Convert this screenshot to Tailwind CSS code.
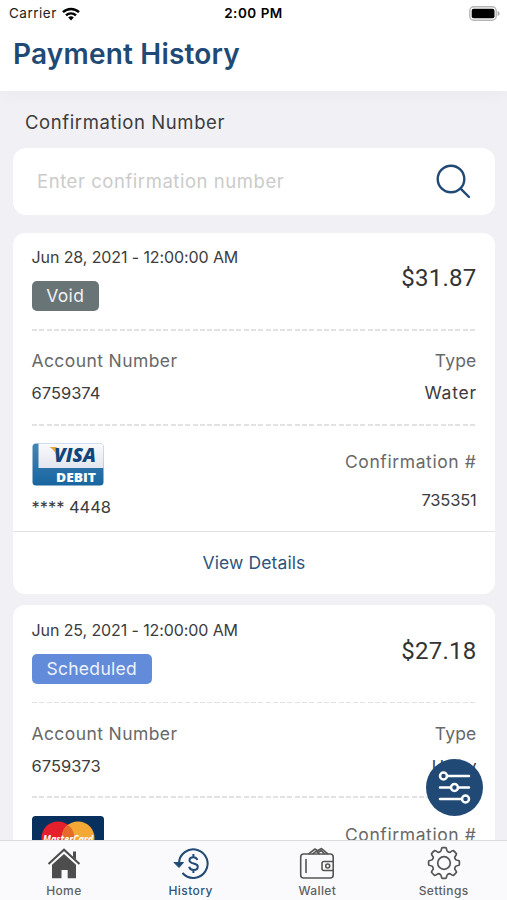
<!DOCTYPE html>
<html lang="en">
<head>
  <meta charset="utf-8">
  <meta name="viewport" content="width=device-width, initial-scale=1">
  <title>Payment History</title>
  <script src="https://cdn.jsdelivr.net/npm/@tailwindcss/browser@4"></script>
</head>
<body class="bg-[#f0f0f5] font-['Inter',sans-serif] text-[#3c3c3c]">
<div class="relative flex flex-col w-[507px] h-[900px] overflow-hidden">

  <header class="h-[91px] shrink-0 bg-white shadow-[0_4px_16px_rgba(0,0,0,0.03)]">
    <div class="grid grid-cols-3 items-center h-[27px] px-[9px] text-[13.5px] text-black">
      <div class="flex items-center gap-[5px]">
        <span class="tracking-[0.5px] text-[#222]">Carrier</span>
        <svg class="w-[18px] h-[14px]" viewBox="0 0 18 14" fill="none" stroke="#000" stroke-width="2.4">
          <path d="M1 5.2a11.5 11.5 0 0 1 16 0M4 8.4a7.2 7.2 0 0 1 10 0" />
          <path d="M9 13.4 6.2 10.6a4 4 0 0 1 5.6 0z" fill="#000" stroke="none" />
        </svg>
      </div>
      <span class="text-center font-semibold tracking-[0.5px] whitespace-nowrap">2:00 PM</span>
      <svg class="justify-self-end -mr-[2px] w-[31px] h-[15px]" viewBox="0 0 31 15">
        <rect x=".8" y=".8" width="26.4" height="13.4" rx="4" fill="#fff" stroke="#b5b5b5" stroke-width="1.4" />
        <rect x="2.7" y="2.7" width="22.8" height="9.6" rx="2" fill="#000" />
        <path d="M28.6 5v5c1.2-.4 2-1.3 2-2.5s-.8-2.1-2-2.5z" fill="#a5a5a5" />
      </svg>
    </div>
    <h1 class="pl-[13px] leading-[54px] text-[28px] font-semibold tracking-[0.2px] text-[#204a75]">Payment History</h1>
  </header>

  <main class="flex flex-col pl-[13px] pr-[12px]">
    <label class="pl-[12px] pt-[19px] leading-6 text-[18.5px] tracking-[0.6px]">Confirmation Number</label>
    <div class="mt-[14px] flex items-center justify-between h-[67px] shrink-0 px-[24px] bg-white rounded-[13px]">
      <span class="text-[18.5px] tracking-[0.55px] text-[#cbcbcb]">Enter confirmation number</span>
      <svg class="w-[35px] h-[35px]" viewBox="0 0 35 35" fill="none" stroke="#204a75" stroke-width="2.4" stroke-linecap="round">
        <circle cx="15" cy="15" r="13.3" />
        <path d="m24.6 24.6 8.4 8.4" />
      </svg>
    </div>

    <!-- Void payment -->
    <section class="mt-[18px] h-[361px] shrink-0 bg-white rounded-[12px]">
      <div class="pl-[18.5px] pr-[18.5px]">
        <div class="flex justify-between h-[96px] pt-[12px]">
          <div>
            <div class="leading-6 text-[16px] tracking-[-0.1px]">Jun 28, 2021 - 12:00:00 AM</div>
            <span class="mt-[12px] flex items-center justify-center w-[67.5px] h-[30px] rounded-[5px] bg-[#687476] text-[17.5px] tracking-[0.4px] text-[#eef1f1]">Void</span>
          </div>
          <div class="pt-[17px] leading-8 font-['Roboto',sans-serif] text-[24px] tracking-[0.25px] text-[#333]">$31.87</div>
        </div>
        <div class="h-[1.5px] bg-[repeating-linear-gradient(90deg,#e2e2e2_0_5px,transparent_5px_7.3px)]"></div>
        <div class="flex justify-between h-[93.5px] pt-[18px] text-[16.5px] leading-6">
          <div>
            <div class="text-[17.5px] tracking-[0.4px] text-[#686868]">Account Number</div>
            <div class="mt-[8px]">6759374</div>
          </div>
          <div class="text-right">
            <div class="text-[17.5px] tracking-[0.2px] text-[#686868]">Type</div>
            <div class="mt-[8px] -mr-[0.5px] text-[17.5px] tracking-[0.8px]">Water</div>
          </div>
        </div>
        <div class="h-[1.5px] bg-[repeating-linear-gradient(90deg,#e2e2e2_0_5px,transparent_5px_7.3px)]"></div>
        <div class="flex justify-between h-[105.5px] pt-[17px] text-[16.5px] leading-6">
          <div>
            <svg class="w-[72px] h-[43px]" viewBox="0 0 72 43">
              <defs>
                <linearGradient id="visa-blue" x1="0" y1="0" x2="0" y2="1"><stop stop-color="#4485b5" /><stop offset="1" stop-color="#1765a0" /></linearGradient>
                <linearGradient id="visa-top" x1="0" y1="0" x2="0" y2="1"><stop stop-color="#fafafc" /><stop offset="1" stop-color="#e3e6ef" /></linearGradient>
              </defs>
              <rect x=".5" y=".5" width="71" height="42" rx="3.5" fill="url(#visa-blue)" />
              <path d="M6.5.5H68q3.500 0 3.500 3.500v21h-65z" fill="url(#visa-top)" />
              <path d="M17.500 4h7l2 5-2 3.500q-2-5.500-7-8.500z" fill="#e9a63a" />
              <text x="22" y="18.500" textLength="42" lengthAdjust="spacingAndGlyphs" font-family="Open Sans, sans-serif" font-size="19" font-weight="800" font-style="italic" fill="#12457d">VISA</text>
              <text x="24" y="38.500" textLength="40" lengthAdjust="spacingAndGlyphs" font-family="Open Sans, sans-serif" font-size="13" font-weight="800" fill="#fff">DEBIT</text>
            </svg>
            <div class="mt-[9px] tracking-[-0.05px]">**** 4448</div>
          </div>
          <div class="pt-[7px] text-right">
            <div class="text-[17.5px] tracking-[0.6px] text-[#686868]">Confirmation #</div>
            <div class="mt-[14px] tracking-[-0.2px]">735351</div>
          </div>
        </div>
      </div>
      <a class="flex items-center justify-center h-[63px] border-t-[1.5px] border-[#e2e2e4] text-[17.5px] tracking-[0.1px] text-[#2d557d]">View Details</a>
    </section>

    <!-- Scheduled payment -->
    <section class="mt-[11px] h-[361px] shrink-0 bg-white rounded-[12px]">
      <div class="pl-[18.5px] pr-[18.5px]">
        <div class="flex justify-between h-[96.5px] pt-[13px]">
          <div>
            <div class="leading-6 text-[16px] tracking-[-0.1px]">Jun 25, 2021 - 12:00:00 AM</div>
            <span class="mt-[12px] flex items-center justify-center w-[120.5px] h-[30px] rounded-[5px] bg-[#628bda] text-[17.5px] tracking-[0.3px] text-[#edf2fc]">Scheduled</span>
          </div>
          <div class="pt-[17px] leading-8 font-['Roboto',sans-serif] text-[24px] tracking-[0.25px] text-[#333]">$27.18</div>
        </div>
        <div class="h-[1.5px] bg-[repeating-linear-gradient(90deg,#e2e2e2_0_5px,transparent_5px_7.3px)]"></div>
        <div class="flex justify-between h-[93px] pt-[19px] text-[16.5px] leading-6">
          <div>
            <div class="text-[17.5px] tracking-[0.4px] text-[#686868]">Account Number</div>
            <div class="mt-[8px]">6759373</div>
          </div>
          <div class="text-right">
            <div class="text-[17.5px] tracking-[0.2px] text-[#686868]">Type</div>
            <div class="mt-[8px]">Utility</div>
          </div>
        </div>
        <div class="h-[1.5px] bg-[repeating-linear-gradient(90deg,#e2e2e2_0_5px,transparent_5px_7.3px)]"></div>
        <div class="flex justify-between h-[105.5px] pt-[18.5px] text-[16.5px] leading-6">
          <svg class="w-[72px] h-[43px]" viewBox="0 0 72 43">
            <rect width="72" height="43" rx="3.5" fill="#08305e" />
            <circle cx="26" cy="22" r="16.5" fill="#e5202c" />
            <circle cx="46" cy="22" r="16.5" fill="#f4a935" />
            <path d="M36 8.900a16.500 16.500 0 0 1 0 26.200 16.500 16.500 0 0 1 0-26.200z" fill="#e56a2c" />
            <text x="11" y="26.500" textLength="50" lengthAdjust="spacingAndGlyphs" font-family="Open Sans, sans-serif" font-size="10" font-weight="700" font-style="italic" fill="#fff">MasterCard</text>
          </svg>
          <div class="pt-[7px] text-right">
            <div class="text-[17.5px] tracking-[0.6px] text-[#686868]">Confirmation #</div>
          </div>
        </div>
      </div>
    </section>
  </main>

  <button class="absolute left-[426px] top-[759px] flex items-center justify-center w-[57px] h-[57px] rounded-full bg-[#204a75]">
    <svg class="w-[33px] h-[33px]" viewBox="0 0 33 33" fill="none" stroke="#fff" stroke-width="2.5" stroke-linecap="round">
      <path d="M9 5h22M2 16.500h10M20 16.500h11M2 28h21" />
      <circle cx="5.500" cy="5" r="3.500" />
      <circle cx="16.500" cy="16.500" r="3.500" />
      <circle cx="27.500" cy="28" r="3.500" />
    </svg>
  </button>

  <nav class="absolute inset-x-0 bottom-0 grid grid-cols-4 h-[60px] border-t border-[#dcdcde] bg-[#fafafc] text-[12px] font-medium tracking-[0.4px] text-[#606060]">
    <a class="flex flex-col items-center pt-[6px]">
      <svg class="ml-[2px] w-[34px] h-[34px]" viewBox="0 0 34 34" fill="#4d4d4d">
        <path d="M17 7 29 17.800V31.300h-8.300V23h-6.200v8.300H5V17.800z" />
        <path d="m1.500 17 15.500-14.300L32.500 17" fill="none" stroke="#4d4d4d" stroke-width="2" />
        <path d="M26 4.500h3v8l-3-2.700z" />
      </svg>
      <span class="ml-[1px] mt-[2px] leading-4">Home</span>
    </a>
    <a class="flex flex-col items-center pt-[6px] text-[#2d557d]">
      <svg class="ml-[2px] w-[36px] h-[34px]" viewBox="0 0 36 34" fill="none" stroke="#204a75" stroke-width="2">
        <path d="M6 16.500a14.300 14.300 0 1 1 3.500 9.500" />
        <path d="M1 15.500h9.500L6 20.500z" fill="#204a75" stroke-width="1" stroke-linejoin="round" />
        <path d="M24.300 13c-.5-2-2-2.800-3.900-2.800-2.300 0-3.900 1.200-3.900 3.100 0 4.600 8.300 2 8.300 6.500 0 2-1.800 3.200-4.200 3.200-2.300 0-4-1.100-4.400-3.200M20.400 7v3M20.400 23v3" />
      </svg>
      <span class="ml-[1px] mt-[2px] leading-4">History</span>
    </a>
    <a class="flex flex-col items-center pt-[6px]">
      <svg class="w-[36px] h-[34px]" viewBox="0 0 36 34" fill="none" stroke="#555" stroke-width="1.600" stroke-linejoin="round" stroke-linecap="round">
        <rect x="1.700" y="7" width="32.500" height="24" rx="3" />
        <path d="M7 12.500v13M34.200 14.500H25q-2 0-2 2v5q0 2 2 2h9.200" />
        <circle cx="28.700" cy="19" r="2" />
        <path d="m10 6.700 6-4.700 2.500 1.700L22.500 1.500l6 5.200M14 6.700l3.500-2.500L20 6.700M20 5l2.300-1.400L25.500 6.700" />
      </svg>
      <span class="ml-[1px] mt-[2px] leading-4">Wallet</span>
    </a>
    <a class="flex flex-col items-center pt-[5px]">
      <svg class="w-[34px] h-[34px]" viewBox="0 0 34 34" fill="none" stroke="#555" stroke-width="1.700" stroke-linejoin="round">
        <circle cx="17" cy="17" r="6.300" />
        <path d="M15.500 1.600H18.500Q19.300 1.600 19.500 2.800 19.900 5 20.400 5.300 21.500 6.300 22.900 6.300 25.200 4.500 26.300 4.500 28 5.800 29.500 7.700 29.500 8.800 27.700 11.100 27.700 12.500 28.700 13.600 29 14.100 31.200 14.500 32.400 14.700 32.400 15.500V18.500Q32.400 19.300 31.200 19.500 29 19.900 28.700 20.400 27.700 21.500 27.700 22.900 29.500 25.200 29.500 26.300 28.200 28 26.300 29.500 25.200 29.500 22.900 27.700 21.500 27.700 20.400 28.700 19.900 29 19.500 31.200 19.300 32.400 18.500 32.400H15.500Q14.700 32.400 14.500 31.200 14.100 29 13.600 28.700 12.500 27.700 11.100 27.700 8.800 29.500 7.700 29.500 6 28.200 4.500 26.300 4.500 25.200 6.300 22.900 6.300 21.500 5.300 20.400 5 19.900 2.800 19.500 1.600 19.300 1.600 18.500V15.500Q1.600 14.700 2.800 14.500 5 14.100 5.300 13.600 6.300 12.500 6.300 11.100 4.500 8.800 4.500 7.700 5.800 6 7.700 4.500 8.800 4.500 11.100 6.300 12.500 6.300 13.600 5.300 14.100 5 14.500 2.800 14.700 1.600 15.500 1.600z" />
      </svg>
      <span class="mt-[3px] leading-4">Settings</span>
    </a>
  </nav>
</div>
</body>
</html>
